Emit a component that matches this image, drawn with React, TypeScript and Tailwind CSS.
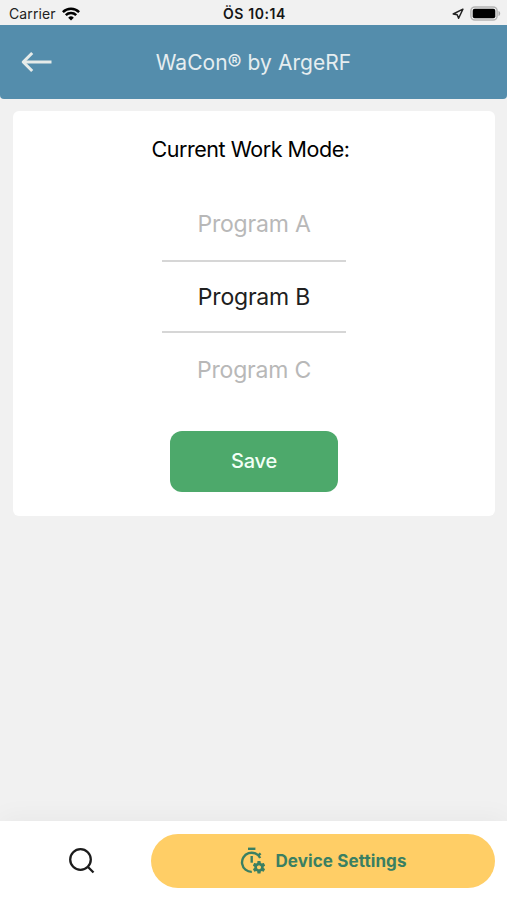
import { useState } from 'react';
import { MdSettings } from 'react-icons/md';

const programs = ['Program A', 'Program B', 'Program C'];

function WifiIcon() {
  return (
    <svg width="18" height="14" viewBox="0 0 18 14" fill="none" stroke="#000" strokeWidth="2.5">
      <path d="M0.9 5.1a11.6 11.6 0 0 1 16.2 0" />
      <path d="M3.8 8.2a7.4 7.4 0 0 1 10.4 0" />
      <path d="M9 13.6 6.2 10.7a4 4 0 0 1 5.6 0Z" fill="#000" stroke="none" />
    </svg>
  );
}

function LocationIcon() {
  return (
    <svg width="12" height="12" viewBox="0 0 12 12" fill="none" stroke="#222" strokeWidth="1.5" strokeLinejoin="round">
      <path d="M10.9 1.2 1.2 6l4 .7 1.4 3.6Z" />
    </svg>
  );
}

function BatteryIcon() {
  return (
    <svg width="31" height="16" viewBox="0 0 31 16">
      <rect x="0.9" y="0.9" width="26.2" height="13.2" rx="4" fill="none" stroke="#b4b4b4" strokeWidth="1.5" />
      <rect x="2.7" y="2.7" width="22.6" height="9.6" rx="2" fill="#000" />
      <path d="M28.5 5v5c1-.3 1.7-1.3 1.7-2.5S29.5 5.3 28.5 5Z" fill="#a9a9a9" />
    </svg>
  );
}

function BackIcon() {
  return (
    <svg width="32" height="22" viewBox="0 0 32 22" fill="none" stroke="#e6ebe9" strokeWidth="3">
      <path d="M2.2 11H30.5" />
      <path d="M11.2 2 2.2 11l9 9" strokeLinejoin="round" />
    </svg>
  );
}

function TimerCogIcon() {
  return (
    <svg width="26" height="30" viewBox="0 0 26 30" fill="none" stroke="#3a7f62" strokeWidth="2.4">
      <path d="M8 2.8h7.4" />
      <path d="M11.7 10v6.7" />
      <path d="m18.2 9.7 2.4-2.4" />
      <path d="M20.2 12A9.6 9.6 0 1 0 11.8 25.9" />
      <MdSettings x="11.2" y="13.5" size={15.6} color="#3a7f62" stroke="none" />
      <circle cx="19" cy="21.3" r="2.8" strokeWidth="1.4" />
    </svg>
  );
}

function StatusBar() {
  return (
    <div className="grid h-[25px] grid-cols-3 items-center pl-[9px] pr-[6px] pt-[2px] text-[14px] text-[#222]">
      <div className="flex items-center gap-[6px]">
        <span className="tracking-[0.1px]">Carrier</span>
        <WifiIcon />
      </div>
      <div className="pr-px text-center font-semibold tracking-[0.6px] text-[#151515]">ÖS 10:14</div>
      <div className="flex items-center justify-end gap-[6px]">
        <LocationIcon />
        <BatteryIcon />
      </div>
    </div>
  );
}

export default function App() {
  const [selected, setSelected] = useState('Program B');

  return (
    <div className="flex h-[900px] w-[507px] flex-col overflow-hidden bg-[#f1f1f1] font-['Inter','Liberation_Sans',sans-serif]">
      <StatusBar />

      <header className="grid h-[74px] shrink-0 grid-cols-[1fr_auto_1fr] items-center rounded-b-[4px] bg-[#548dac] px-[21px]">
        <button aria-label="Back">
          <BackIcon />
        </button>
        <h1 className="pt-[2px] text-[21px] tracking-[0.05px] text-[#e6edf0]">WaCon® by ArgeRF</h1>
      </header>

      <main className="grow px-3 pt-3">
        <section className="ml-px flex h-[405px] w-[482px] flex-col items-center rounded-[6px] bg-white">
          <h2 className="mt-[22px] pr-[7px] text-[21.5px] leading-8 tracking-[-0.47px] text-black">
            Current Work Mode:
          </h2>

          <div className="mt-[22px] flex w-[184px] flex-col tracking-[-0.2px]">
            {programs.map((program) => (
              <button
                key={program}
                onClick={() => setSelected(program)}
                className={
                  program === selected
                    ? 'h-[73px] border-y-2 border-[#d6d6d6] pt-px text-[23px] text-[#202020]'
                    : 'h-[73px] pt-px text-[23px] text-[#b8b8b8]'
                }
              >
                {program}
              </button>
            ))}
          </div>

          <button className="mt-[25px] h-[61px] w-[168px] rounded-xl bg-[#4da96b] pb-px text-[20px] font-medium tracking-[-0.2px] text-[#f1fff5]">
            Save
          </button>
        </section>
      </main>

      <nav className="flex h-[79px] shrink-0 items-center bg-white pr-3 shadow-[0_-4px_24px_rgba(0,0,0,0.04)]">
        <button aria-label="Search" className="flex w-[151px] justify-center pl-[12px]">
          <svg width="27" height="27" viewBox="0 0 27 27" fill="none" stroke="#1c1c1c" strokeWidth="2.3">
            <circle cx="12.5" cy="12.5" r="10.3" />
            <path d="m19.5 19.5 6 6" />
          </svg>
        </button>
        <button className="flex h-[54px] grow items-center justify-center gap-[9px] rounded-full bg-[#ffce66] pl-px text-[17px] font-bold tracking-[0.1px] text-[#3a7f62]">
          <TimerCogIcon />
          <span className="pt-[2px]">Device Settings</span>
        </button>
      </nav>
    </div>
  );
}
